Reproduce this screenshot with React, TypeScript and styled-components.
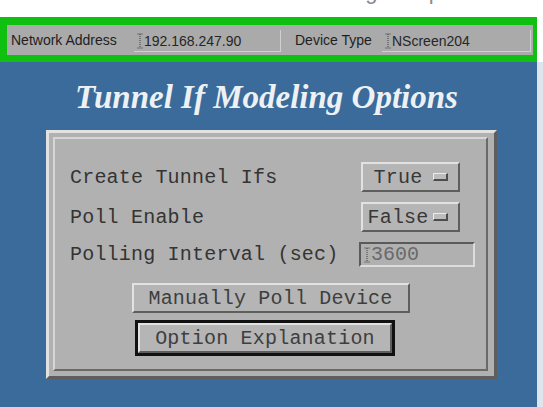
import styled, { createGlobalStyle } from "styled-components"

const GlobalStyle = createGlobalStyle`
  html, body {
    margin: 0;
    padding: 0;
    background: #ffffff;
  }
  body {
    font-family: "Liberation Sans", Arial, sans-serif;
  }
`

const MONO = `"Liberation Mono", "DejaVu Sans Mono", monospace`

const FACE = "#b1b1b1"
const LIGHT = "#e2e2e2"
const DARK = "#5e5e5e"

function Caret() {
  return (
    <CaretSvg width="6" height="16" viewBox="0 0 6 16">
      <path d="M0.5 1h5M0.5 15h5M3 1v14" stroke="#3a3a3a" strokeWidth="1" strokeDasharray="1 1" fill="none" />
    </CaretSvg>
  )
}

interface OptionMenuProps {
  value: string
}

function OptionMenu(props: OptionMenuProps) {
  return (
    <MenuButton type="button">
      <MenuText>{props.value}</MenuText>
      <MenuMark />
    </MenuButton>
  )
}

export default function App() {
  return (
    <>
      <GlobalStyle />
      <Screen>
        <Main>
          <TopClip>
            <Ghost>Config Setup</Ghost>
          </TopClip>
          <InfoFrame>
            <InfoBar>
              <InfoLabel $width={123}>Network Address</InfoLabel>
              <InfoField $width={147}>
                <Caret />
                192.168.247.90
              </InfoField>
              <InfoLabel $width={87} $gap={14}>
                Device Type
              </InfoLabel>
              <InfoField $width={149}>
                <Caret />
                NScreen204
              </InfoField>
            </InfoBar>
          </InfoFrame>
          <Desk>
            <Title>Tunnel If Modeling Options</Title>
            <Panel>
              <Inset>
                <Form>
                  <FieldLabel>Create Tunnel Ifs</FieldLabel>
                  <OptionMenu value="True" />
                  <FieldLabel>Poll Enable</FieldLabel>
                  <OptionMenu value="False" />
                  <FieldLabel>Polling Interval (sec)</FieldLabel>
                  <TextEntry>
                    <Caret />
                    3600
                  </TextEntry>
                </Form>
                <Actions>
                  <PushButton type="button" $width={278}>
                    Manually Poll Device
                  </PushButton>
                  <DefaultRing>
                    <PushButton type="button" $width={254}>
                      Option Explanation
                    </PushButton>
                  </DefaultRing>
                </Actions>
              </Inset>
            </Panel>
          </Desk>
        </Main>
        <Edge />
      </Screen>
    </>
  )
}

const Screen = styled.div`
  display: flex;
  width: 543px;
  height: 407px;
  overflow: hidden;
`

const Main = styled.div`
  display: flex;
  flex-direction: column;
  width: 537px;
`

const Edge = styled.div`
  flex: 1;
  background: linear-gradient(to bottom, #ffffff 0, #ffffff 62px, #dfe5ec 62px);
`

const TopClip = styled.div`
  height: 17px;
  overflow: hidden;
  background: #ffffff;
  display: flex;
  justify-content: flex-end;
  padding-right: 96px;
`

const Ghost = styled.span`
  font-size: 22px;
  line-height: 22px;
  color: #8a8a8a;
  margin-top: -19px;
`

const InfoFrame = styled.div`
  height: 45px;
  box-sizing: border-box;
  padding: 8px 4px 7px 7px;
  background: #10c010;
`

const InfoBar = styled.div`
  display: flex;
  align-items: center;
  height: 30px;
  background: #aaaaaa;
  padding-left: 4px;
`

const InfoLabel = styled.span<{ $width: number; $gap?: number }>`
  flex: none;
  font-size: 14px;
  color: #1e1e1e;
  margin-left: ${(p) => p.$gap ?? 0}px;
  width: ${(p) => p.$width}px;
  white-space: nowrap;
`

const InfoField = styled.div<{ $width: number }>`
  flex: none;
  display: flex;
  align-items: center;
  gap: 1px;
  box-sizing: border-box;
  width: ${(p) => p.$width}px;
  height: 22px;
  margin-top: 2px;
  padding-left: 3px;
  font-size: 14px;
  color: #262626;
  border-right: 1px solid #d0d0d0;
  border-bottom: 1px solid #d0d0d0;
`

const CaretSvg = styled.svg`
  flex: none;
  display: block;
`

const Desk = styled.div`
  flex: 1;
  display: flex;
  flex-direction: column;
  background: #3a6b9b;
`

const Title = styled.h1`
  margin: 17px 0 0;
  text-align: center;
  font-family: "Liberation Serif", "Times New Roman", serif;
  font-style: italic;
  font-weight: bold;
  font-size: 33px;
  line-height: 36px;
  color: #eef1f4;
  padding-right: 4px;
`

const Panel = styled.div`
  box-sizing: border-box;
  width: 451px;
  height: 249px;
  margin: 15px 0 0 46px;
  padding: 4px 6px 5px 4px;
  background: ${FACE};
  border: 3px solid;
  border-color: ${LIGHT} ${DARK} ${DARK} ${LIGHT};
`

const Inset = styled.div`
  height: 100%;
  box-sizing: border-box;
  display: flex;
  flex-direction: column;
  padding: 23px 0 0 15px;
  border: 2px solid;
  border-color: #d6d6d6 #6a6a6a #6a6a6a #d6d6d6;
`

const Form = styled.div`
  display: grid;
  grid-template-columns: 289px auto;
  grid-template-rows: 30px 30px 25px;
  row-gap: 10px;
  align-items: center;
  justify-items: start;
`

const FieldLabel = styled.span`
  font-family: ${MONO};
  font-size: 20px;
  letter-spacing: 0.2px;
  color: #343434;
  white-space: pre;
`

const raised = `
  background: #b5b5b5;
  border: 2px solid;
  border-color: ${LIGHT} ${DARK} ${DARK} ${LIGHT};
`

const MenuButton = styled.button`
  ${raised}
  display: flex;
  align-items: center;
  box-sizing: border-box;
  width: 99px;
  height: 30px;
  margin-left: 2px;
  padding: 0 10px 0 0;
  cursor: pointer;
`

const MenuText = styled.span`
  flex: 1;
  text-align: center;
  font-family: ${MONO};
  font-size: 20px;
  letter-spacing: 0.2px;
  color: #383838;
`

const MenuMark = styled.span`
  box-sizing: border-box;
  width: 15px;
  height: 8px;
  background: #bdbdbd;
  border-style: solid;
  border-width: 1px 2px 2px 1px;
  border-color: #ebebeb #4e4e4e #4e4e4e #ebebeb;
`

const TextEntry = styled.div`
  display: flex;
  align-items: center;
  gap: 1px;
  box-sizing: border-box;
  width: 116px;
  height: 25px;
  padding-left: 3px;
  background: #b0b0b0;
  border: 2px solid;
  border-color: #5a5a5a #dcdcdc #dcdcdc #5a5a5a;
  font-family: ${MONO};
  font-size: 20px;
  color: #6a6a6a;
`

const Actions = styled.div`
  display: flex;
  flex-direction: column;
  align-items: center;
  gap: 7px;
  margin-top: 16px;
  padding-right: 15px;
`

const PushButton = styled.button<{ $width: number }>`
  ${raised}
  display: block;
  box-sizing: border-box;
  width: ${(p) => p.$width}px;
  height: 30px;
  padding: 0;
  font-family: ${MONO};
  font-size: 20px;
  letter-spacing: 0.2px;
  color: #3e3e3e;
  cursor: pointer;
`

const DefaultRing = styled.div`
  border: 3px solid #111111;
  margin-left: -11px;
`
